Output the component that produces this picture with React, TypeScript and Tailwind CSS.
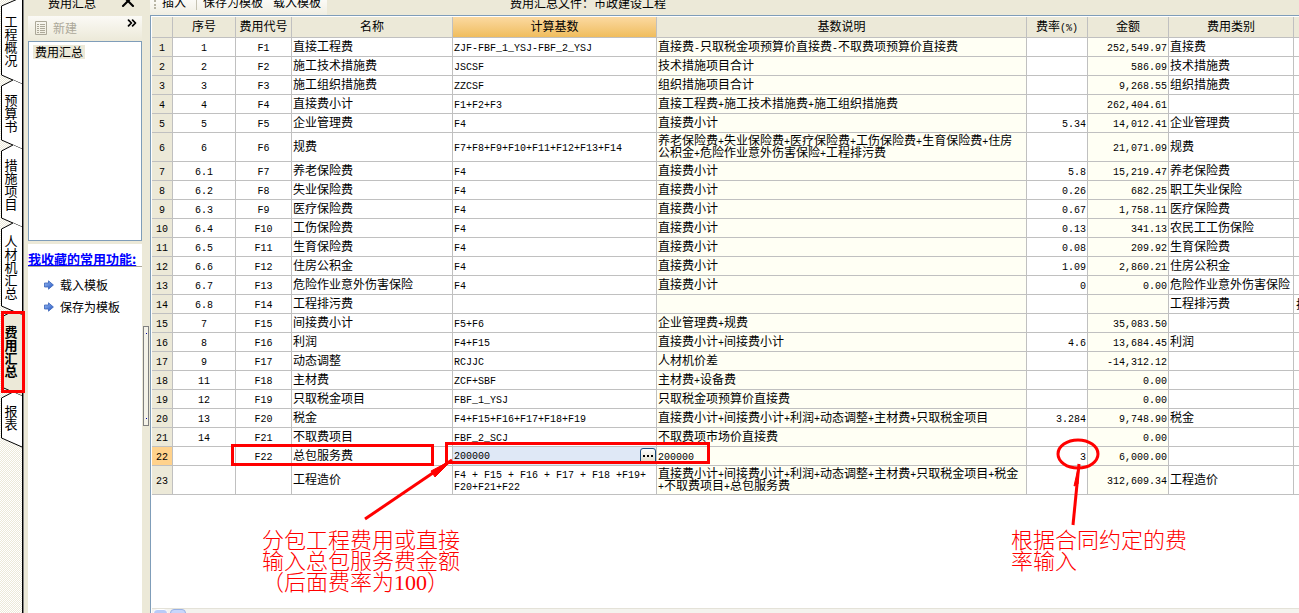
import { useState } from "react";
import { X, ChevronsRight } from "lucide-react";

type Row = {
  no: string;
  code: string;
  name: string;
  base: string;
  desc: string;
  rate: string;
  amount: string;
  kind: string;
  extra?: string;
};

const tabs = [
  { label: "工程概况", height: 80 },
  { label: "预算书", height: 65 },
  { label: "措施项目", height: 78 },
  { label: "人材机汇总", height: 88 },
  { label: "费用汇总", height: 81 },
  { label: "报表", height: 51 },
];

const rows: Row[] = [
  { no: "1", code: "F1", name: "直接工程费", base: "ZJF-FBF_1_YSJ-FBF_2_YSJ", desc: "直接费-只取税金项预算价直接费-不取费项预算价直接费", rate: "", amount: "252,549.97", kind: "直接费" },
  { no: "2", code: "F2", name: "施工技术措施费", base: "JSCSF", desc: "技术措施项目合计", rate: "", amount: "586.09", kind: "技术措施费" },
  { no: "3", code: "F3", name: "施工组织措施费", base: "ZZCSF", desc: "组织措施项目合计", rate: "", amount: "9,268.55", kind: "组织措施费" },
  { no: "4", code: "F4", name: "直接费小计", base: "F1+F2+F3", desc: "直接工程费+施工技术措施费+施工组织措施费", rate: "", amount: "262,404.61", kind: "" },
  { no: "5", code: "F5", name: "企业管理费", base: "F4", desc: "直接费小计", rate: "5.34", amount: "14,012.41", kind: "企业管理费" },
  { no: "6", code: "F6", name: "规费", base: "F7+F8+F9+F10+F11+F12+F13+F14", desc: "养老保险费+失业保险费+医疗保险费+工伤保险费+生育保险费+住房\n公积金+危险作业意外伤害保险+工程排污费", rate: "", amount: "21,071.09", kind: "规费" },
  { no: "6.1", code: "F7", name: "养老保险费", base: "F4", desc: "直接费小计", rate: "5.8", amount: "15,219.47", kind: "养老保险费" },
  { no: "6.2", code: "F8", name: "失业保险费", base: "F4", desc: "直接费小计", rate: "0.26", amount: "682.25", kind: "职工失业保险" },
  { no: "6.3", code: "F9", name: "医疗保险费", base: "F4", desc: "直接费小计", rate: "0.67", amount: "1,758.11", kind: "医疗保险费" },
  { no: "6.4", code: "F10", name: "工伤保险费", base: "F4", desc: "直接费小计", rate: "0.13", amount: "341.13", kind: "农民工工伤保险" },
  { no: "6.5", code: "F11", name: "生育保险费", base: "F4", desc: "直接费小计", rate: "0.08", amount: "209.92", kind: "生育保险费" },
  { no: "6.6", code: "F12", name: "住房公积金", base: "F4", desc: "直接费小计", rate: "1.09", amount: "2,860.21", kind: "住房公积金" },
  { no: "6.7", code: "F13", name: "危险作业意外伤害保险", base: "F4", desc: "直接费小计", rate: "0", amount: "0.00", kind: "危险作业意外伤害保险" },
  { no: "6.8", code: "F14", name: "工程排污费", base: "", desc: "", rate: "", amount: "", kind: "工程排污费", extra: "排" },
  { no: "7", code: "F15", name: "间接费小计", base: "F5+F6", desc: "企业管理费+规费", rate: "", amount: "35,083.50", kind: "" },
  { no: "8", code: "F16", name: "利润", base: "F4+F15", desc: "直接费小计+间接费小计", rate: "4.6", amount: "13,684.45", kind: "利润" },
  { no: "9", code: "F17", name: "动态调整", base: "RCJJC", desc: "人材机价差", rate: "", amount: "-14,312.12", kind: "" },
  { no: "11", code: "F18", name: "主材费", base: "ZCF+SBF", desc: "主材费+设备费", rate: "", amount: "0.00", kind: "" },
  { no: "12", code: "F19", name: "只取税金项目", base: "FBF_1_YSJ", desc: "只取税金项预算价直接费", rate: "", amount: "0.00", kind: "" },
  { no: "13", code: "F20", name: "税金", base: "F4+F15+F16+F17+F18+F19", desc: "直接费小计+间接费小计+利润+动态调整+主材费+只取税金项目", rate: "3.284", amount: "9,748.90", kind: "税金" },
  { no: "14", code: "F21", name: "不取费项目", base: "FBF_2_SCJ", desc: "不取费项市场价直接费", rate: "", amount: "0.00", kind: "" },
  { no: "", code: "F22", name: "总包服务费", base: "200000", desc: "200000", rate: "3", amount: "6,000.00", kind: "" },
  { no: "", code: "", name: "工程造价", base: "F4 + F15 + F16 + F17 + F18 +F19+\nF20+F21+F22", desc: "直接费小计+间接费小计+利润+动态调整+主材费+只取税金项目+税金\n+不取费项目+总包服务费", rate: "", amount: "312,609.34", kind: "工程造价" },
];

const EDIT_ROW = 21;
const cell = "h-[19px] overflow-hidden border-r border-b border-[#c0c0c0] px-px pt-0 pb-0.5 whitespace-pre";
const head = "h-[21px] border-r border-b border-[#c0c0c0] p-0 pb-0.5 font-normal whitespace-nowrap";

// Half-width runs go in a monospace face, two of them per Chinese character
function Mixed({ text }: { text: string }) {
  return (
    <>
      {text.split(/([\x20-\x7e]+)/).map((part, i) =>
        i % 2 ? (
          <span key={i} className="font-['Liberation_Mono',monospace] text-[10px] leading-[0px]">
            {part}
          </span>
        ) : (
          part
        )
      )}
    </>
  );
}

function SideTabs() {
  const [active, setActive] = useState(4);

  return (
    <nav className="flex w-6 shrink-0 flex-col border-r border-[#808080] bg-[repeating-conic-gradient(#ece9d8_0_25%,#fff_0_50%)] bg-[length:2px_2px]">
      <div className="flex flex-1 flex-col border-r border-black">
        {tabs.map((tab, i) => (
          <button
            key={tab.label}
            onClick={() => setActive(i)}
            style={{ height: tab.height }}
            className={`relative flex w-full shrink-0 items-center justify-center text-[13px] leading-[13px] ${active === i ? "font-bold" : ""}`}
          >
            <svg className="absolute top-0 left-0 h-full w-full overflow-visible" fill="none">
              <path
                d={`M22 ${i ? 4 : -2} L13 0 L1 6 V${tab.height - 5} L22 ${tab.height + 4} Z`}
                fill={active === i ? "#ece9d8" : "#fff"}
              />
              <path
                d={`M${i ? "13 0" : "20 -2"} L1.5 6 V${tab.height - 5} L22 ${tab.height + 4}`}
                stroke="#000"
              />
            </svg>
            <span className="relative w-[13px] pb-px break-all">{tab.label}</span>
          </button>
        ))}
      </div>
    </nav>
  );
}

function BlueArrow() {
  return (
    <svg width="10" height="10" viewBox="0 0 10 10">
      <defs>
        <linearGradient id="arrow" x1="0" y1="0" x2="1" y2="1">
          <stop offset="0" stopColor="#9cc0f5" />
          <stop offset="1" stopColor="#1f4fc0" />
        </linearGradient>
      </defs>
      <path d="M.5 3 H4.5 V.8 L9.4 5 L4.5 9.2 V7 H.5 Z" fill="url(#arrow)" stroke="#3a63b8" strokeWidth=".8" />
    </svg>
  );
}

function Sidebar() {
  return (
    <aside className="flex w-[114px] shrink-0 flex-col">
      <div className="flex h-[15px] shrink-0 items-end justify-between pr-1 pb-1 pl-5 leading-4">
        <span>费用汇总</span>
        <button aria-label="关闭">
          <X size={20} strokeWidth={2.5} />
        </button>
      </div>
      <div className="mt-px flex h-[25px] shrink-0 items-start gap-1.5 bg-linear-to-b from-[#fbfaf6] to-[#ece9d8] px-[7px] pt-1">
        <button className="flex items-center gap-1.5 text-[#aca899]">
          <svg width="12" height="14" viewBox="0 0 12 14" fill="none" stroke="#aca899">
            <path d="M.5 .5 H11.5 V13.5 H.5 Z M2 3.5 H4 M5 3.5 H10 M2 5.5 H4 M5 5.5 H10 M2 7.5 H4 M5 7.5 H10 M2 9.5 H4 M5 9.5 H10 M2 11.5 H4 M5 11.5 H10" />
          </svg>
          <span className="leading-4">新建</span>
        </button>
        <button aria-label="更多" className="-mt-1 -mr-1 ml-auto">
          <ChevronsRight size={14} strokeWidth={3} />
        </button>
      </div>
      <div className="h-[200px] shrink-0 border border-[#7f9db9] bg-white px-1 py-px">
        <span className="inline-block bg-[#ece9d8] px-0.5 leading-[14px]">费用汇总</span>
      </div>
      <div className="mt-[3px] flex-1 bg-white pt-[7px]">
        <h2 className="border-b border-[#aca899] text-[13px] leading-[15px] font-bold whitespace-nowrap text-[#0000ff] underline">
          我收藏的常用功能:
        </h2>
        <ul className="mt-2.5 flex flex-col gap-1.5 pl-4">
          {["载入模板", "保存为模板"].map((item) => (
            <li key={item}>
              <a href="#" className="flex items-center gap-1.5 leading-4 whitespace-nowrap">
                <BlueArrow />
                {item}
              </a>
            </li>
          ))}
        </ul>
      </div>
    </aside>
  );
}

function FeeTable() {
  return (
    <table className="w-full table-fixed border-separate border-spacing-0 leading-[12px]">
      <colgroup>
        <col className="w-[21px]" />
        <col className="w-[63px]" />
        <col className="w-[56px]" />
        <col className="w-[161px]" />
        <col className="w-[204px]" />
        <col />
        <col className="w-[61px]" />
        <col className="w-[81px]" />
        <col className="w-[125px]" />
        <col className="w-[5px]" />
      </colgroup>
      <thead className="bg-[#ece9d8]">
        <tr>
          <th className={head}></th>
          <th className={head}>序号</th>
          <th className={head}>费用代号</th>
          <th className={head}>名称</th>
          <th className={`${head} bg-linear-to-b from-[#fbd9a0] to-[#f0bd5c]`}>计算基数</th>
          <th className={head}>基数说明</th>
          <th className={head}><Mixed text="费率(%)" /></th>
          <th className={head}>金额</th>
          <th className={head}>费用类别</th>
          <th className="border-b border-[#c0c0c0] p-0"></th>
        </tr>
      </thead>
      <tbody>
        {rows.map((row, i) => (
          <tr key={i}>
            <td className={`${cell} text-center ${i === EDIT_ROW ? "bg-[#ffd28c]" : "bg-[#ece9d8]"} ${row.desc.includes("\n") ? "h-[29px]" : ""}`}>
              <Mixed text={String(i + 1)} />
            </td>
            <td className={`${cell} text-center`}><Mixed text={row.no} /></td>
            <td className={`${cell} text-center`}><Mixed text={row.code} /></td>
            <td className={cell}><Mixed text={row.name} /></td>
            {i === EDIT_ROW ? (
              <td className="border-r border-b border-[#c0c0c0] bg-[#dfe8f6] p-0">
                <div className="flex h-[18px] items-center">
                  <input
                    aria-label="计算基数"
                    defaultValue={row.base}
                    className="h-4 min-w-0 flex-1 bg-transparent px-px font-['Liberation_Mono',monospace] text-[10px] outline-none"
                  />
                  <button
                    aria-label="编辑计算基数"
                    className="flex h-4 w-4 items-center justify-center gap-0.5 rounded-[3px] border border-[#1c4f80] bg-linear-to-b from-white to-[#dfdccb]"
                  >
                    <i className="size-0.5 bg-black" />
                    <i className="size-0.5 bg-black" />
                    <i className="size-0.5 bg-black" />
                  </button>
                </div>
              </td>
            ) : (
              <td className={cell}><Mixed text={row.base} /></td>
            )}
            <td className={`${cell} bg-[#fffff4]`}><Mixed text={row.desc} /></td>
            <td className={`${cell} text-right`}><Mixed text={row.rate} /></td>
            <td className={`${cell} bg-[#fffff4] text-right`}><Mixed text={row.amount} /></td>
            <td className={cell}><Mixed text={row.kind} /></td>
            <td className="overflow-hidden border-b border-[#c0c0c0] p-0 pl-0.5 whitespace-pre">{row.extra}</td>
          </tr>
        ))}
      </tbody>
    </table>
  );
}

// Red review marks drawn over the sheet
function Annotations() {
  return (
    <div className="pointer-events-none absolute inset-0 text-[22px] leading-[21px] font-light text-[#ff0000]">
      <div className="absolute top-[444px] left-[81px] h-[22px] w-[203px] border-3 border-[#ff0000]" />
      <div className="absolute top-[442px] left-[295px] h-[22px] w-[265px] border-3 border-[#ff0000]" />
      <svg className="absolute top-[455px] left-[210px]" width="100" height="70" fill="none" stroke="#ff0000">
        <path d="M5 64 L92 5" strokeWidth="3" />
        <path d="M92 5 L71 16 L75 22 Z" fill="#ff0000" strokeWidth="1" />
      </svg>
      <p className="absolute top-[528px] left-[112px] whitespace-pre">
        {"分包工程费用或直接\n输入总包服务费金额\n（后面费率为"}
        <span className="font-['Liberation_Serif',serif] leading-[0px]">100</span>）
      </p>
      <svg className="absolute top-[436px] right-[195px]" width="50" height="95" fill="none" stroke="#ff0000">
        <ellipse cx="24" cy="18" rx="20" ry="14" strokeWidth="3" />
        <path d="M25 28 L19 89" strokeWidth="3" />
        <path d="M25 28 L20 50 L24 48 Z" fill="#ff0000" strokeWidth="1" />
      </svg>
      <p className="absolute top-[528px] right-[112px] whitespace-pre">
        {"根据合同约定的费\n率输入"}
      </p>
    </div>
  );
}

function Sheet() {
  return (
    <main className="relative flex min-w-0 flex-1 flex-col overflow-hidden">
      <div className="flex h-[15px] shrink-0 leading-4">
        <div className="flex w-[177px] shrink-0 items-end bg-linear-to-b from-[#fbfaf6] to-[#f0eee2] pb-[5px] pl-1 whitespace-nowrap">
          <span className="mb-px h-4 border-l-2 border-dotted border-[#b8b5a5]" />
          <button className="ml-1.5">插入</button>
          <span className="mr-1.5 ml-2.5 h-4 border-l border-[#c5c2b2]" />
          <button>保存为模板</button>
          <button className="ml-2.5">载入模板</button>
        </div>
        <h1 className="ml-[183px] flex items-end pb-1 whitespace-nowrap">费用汇总文件：市政建设工程</h1>
      </div>
      <div className="flex flex-1 flex-col border-t border-l border-[#7f9db9] bg-white pt-px pl-px">
        <FeeTable />
        <div className="mt-auto flex h-[5px] shrink-0 items-start gap-0.5 overflow-hidden border-t border-[#e4e2d8] bg-[#f4f3ee] pl-px">
          <button aria-label="向左滚动" className="h-4 w-[15px] rounded-sm border border-white bg-[#b9cbf7]" />
          <button aria-label="滚动条" className="h-4 w-4 rounded-sm border border-[#98b1e4] bg-[#c8d6fb]" />
        </div>
      </div>
      <Annotations />
    </main>
  );
}

export default function App() {
  return (
    <div className="relative flex h-screen overflow-hidden bg-[#ece9d8] font-['Noto_Sans_CJK_SC',sans-serif] text-[12px] text-black">
      <SideTabs />
      <div className="w-1 shrink-0" />
      <Sidebar />
      <div className="w-2 shrink-0 pt-[326px] pl-px">
        <div className="flex h-[100px] w-1.5 flex-col items-center justify-between border border-[#808080] bg-[#f4f2e8] py-1.5">
          <i className="size-px bg-[#0000a0]" />
          <i className="size-px bg-[#0000a0]" />
        </div>
      </div>
      <Sheet />
      <div className="pointer-events-none absolute top-[311px] left-px h-[82px] w-6 border-3 border-[#ff0000]" />
    </div>
  );
}
